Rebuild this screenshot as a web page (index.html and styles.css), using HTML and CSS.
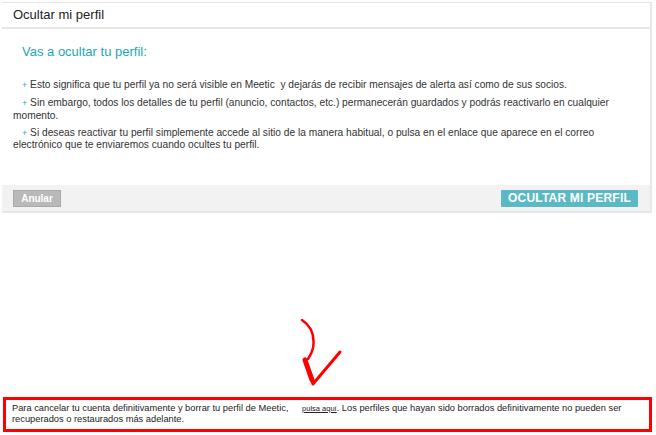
FILE: index.html
```html
<!DOCTYPE html>
<html lang="es">
<head>
<meta charset="utf-8">
<title>Ocultar mi perfil</title>
<link rel="stylesheet" href="styles.css">
</head>
<body>
<div class="page">
  <section class="panel">
    <header class="panel-head">Ocultar mi perfil</header>
    <div class="panel-body">
      <h2 class="title">Vas a ocultar tu perfil:</h2>
      <p class="item"><span class="plus">+</span> Esto significa que tu perfil ya no será visible en Meetic&nbsp; y dejarás de recibir mensajes de alerta así como de sus socios.</p>
      <p class="item"><span class="plus">+</span> Sin embargo, todos los detalles de tu perfil (anuncio, contactos, etc.) permanecerán guardados y podrás reactivarlo en cualquier momento.</p>
      <p class="item"><span class="plus">+</span> Si deseas reactivar tu perfil simplemente accede al sitio de la manera habitual, o pulsa en el enlace que aparece en el correo electrónico que te enviaremos cuando ocultes tu perfil.</p>
    </div>
    <footer class="panel-foot">
      <button class="btn btn-cancel" type="button">Anular</button>
      <button class="btn btn-hide" type="button">OCULTAR MI PERFIL</button>
    </footer>
  </section>
  <div class="arrow-area">
    <svg class="arrow" width="50" height="72" viewBox="0 0 50 72" aria-hidden="true">
      <path d="M4 1 C13 7 17 17 15 29 C14 34 12 37 10 40" fill="none" stroke="#f00" stroke-width="2.5" stroke-linecap="round"/>
      <path d="M7 40 L15 65 L42 33" fill="none" stroke="#f00" stroke-width="3" stroke-linejoin="round" stroke-linecap="round"/>
      <path d="M7 41 L14 61" fill="none" stroke="#f00" stroke-width="5" stroke-linecap="round"/>
    </svg>
  </div>
  <div class="notice">Para cancelar tu cuenta definitivamente y borrar tu perfil de Meetic, <a class="link" href="#">pulsa aquí</a>. Los perfiles que hayan sido borrados definitivamente no pueden ser recuperados o restaurados más adelante.</div>
</div>
</body>
</html>
```
FILE: styles.css
```css
html, body {
  margin: 0;
  padding: 0;
  background: #fff;
}
body {
  font-family: Arial, "Liberation Sans", sans-serif;
  color: #222;
}
.page {
  width: 656px;
  height: 435px;
  display: flex;
  flex-direction: column;
  padding-top: 2px;
  box-sizing: border-box;
}
.panel {
  margin: 0 4px 0 2px;
  border-top: 1px solid #e4e4e4;
  border-right: 2px solid #e8e8e8;
}
.panel-head {
  height: 24px;
  line-height: 24px;
  padding-left: 11px;
  font-size: 13px;
  color: #222;
  border-bottom: 2px solid #e6e6e6;
}
.panel-body {
  height: 156px;
  box-sizing: border-box;
  padding: 15px 40px 0 11px;
}
.title {
  margin: 0 0 19px 9px;
  font-size: 13px;
  font-weight: normal;
  color: #1ea7b3;
  line-height: 16px;
}
.item {
  margin: 0 0 5.5px 0;
  font-size: 10.2px;
  line-height: 11.5px;
  color: #333;
  text-indent: 9px;
}
.plus {
  color: #2aaab5;
  font-size: 9px;
}
.panel-foot {
  display: flex;
  justify-content: space-between;
  align-items: center;
  background: #f2f2f2;
  border-bottom: 2px solid #e6e6e6;
  height: 26px;
  padding: 0 12px 0 11px;
}
.btn {
  border: none;
  font-family: Arial, "Liberation Sans", sans-serif;
  font-weight: bold;
  color: #fff;
  padding: 0;
  cursor: pointer;
}
.btn-cancel {
  width: 48px;
  height: 17px;
  background: #b9b9b9;
  border: 1px solid #aaa;
  font-size: 10px;
}
.btn-hide {
  width: 137px;
  height: 17px;
  background: #5bb9c6;
  font-size: 12px;
  border-radius: 1px;
  letter-spacing: 0.2px;
}
.arrow-area {
  flex: 1;
  display: flex;
  align-items: flex-end;
  padding-left: 298px;
  padding-bottom: 6px;
}
.arrow {
  display: block;
}
.notice {
  margin: 0 4px 3px 3px;
  border: 3px solid #f00;
  height: 35px;
  padding: 3px 6px 0 6px;
  box-sizing: border-box;
  font-size: 9.3px;
  line-height: 11px;
  color: #222;
}
.link {
  color: #222;
  font-size: 7.5px;
  text-decoration: underline;
  margin-left: 11px;
}
```
